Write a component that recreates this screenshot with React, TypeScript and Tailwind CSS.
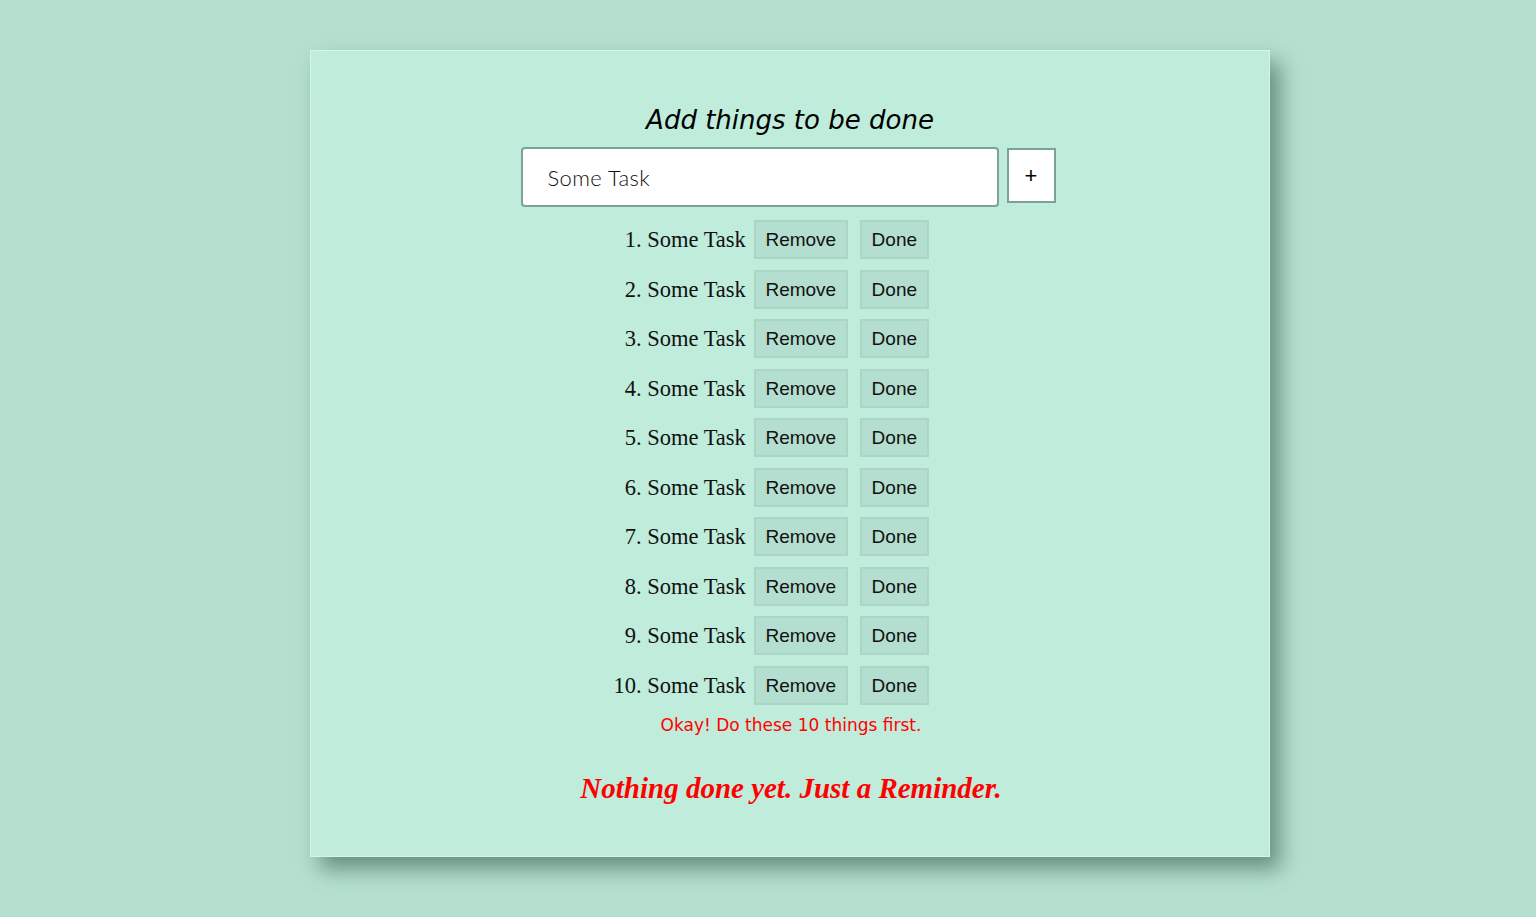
import * as React from "react";

const tasks = Array.from({ length: 10 }, () => "Some Task");

function TaskRow({ text }: { text: string }) {
  return (
    <li className="h-[39px] whitespace-nowrap font-['Liberation_Serif',serif] text-[22.5px] leading-[39px] text-[#111]">
      {text}
      <button className="ml-[8px] h-[39px] w-[94px] border-2 border-[#abd5c5] bg-[#b4decf] align-top font-['Liberation_Sans',Arial,sans-serif] text-[19px] leading-none text-[#111]">
        Remove
      </button>
      <button className="ml-[12px] h-[39px] w-[69px] border-2 border-[#abd5c5] bg-[#b4decf] align-top font-['Liberation_Sans',Arial,sans-serif] text-[19px] leading-none text-[#111]">
        Done
      </button>
    </li>
  );
}

export default function App() {
  const [value, setValue] = React.useState("Some Task");
  return (
    <div className="min-h-[917px] w-full bg-[#b5e0d0] pl-[310px] pt-[50px]">
      <div className="flex h-[807px] w-[960px] flex-col items-center border border-[#d6f5ea] bg-[#bfecdb] pr-[4px] shadow-[10px_12px_20px_rgba(50,90,75,0.6)]">
        <h1 className="mt-[52px] ml-[4px] font-['DejaVu_Sans',sans-serif] text-[26px] italic leading-[34px] text-black">
          Add things to be done
        </h1>
        <div className="mt-[10px] flex items-start gap-[8px]">
          <input
            value={value}
            onChange={(e) => setValue(e.target.value)}
            className="h-[60px] w-[478px] rounded-[4px] border-2 border-[#7aa395] bg-white px-[25px] font-['Lato',sans-serif] text-[22px] font-light tracking-[0.4px] text-[#111] outline-none"
          />
          <button className="mt-[1px] h-[55px] w-[49px] border-2 border-[#7aa395] bg-white font-['Liberation_Sans',sans-serif] text-[22px] leading-none text-black">
            +
          </button>
        </div>
        <ol className="mt-[13px] flex list-decimal flex-col gap-[10.5px]">
          {tasks.map((t, i) => (
            <TaskRow key={i} text={t} />
          ))}
        </ol>
        <p className="mt-[8px] ml-[6px] font-['DejaVu_Sans',sans-serif] text-[17px] leading-[24px] text-[#ff0000]">
          Okay! Do these 10 things first.
        </p>
        <p className="mt-[33px] ml-[6px] font-['Liberation_Serif',serif] text-[29px] font-bold italic leading-[36px] text-[#ff0000]">
          Nothing done yet. Just a Reminder.
        </p>
      </div>
    </div>
  );
}
